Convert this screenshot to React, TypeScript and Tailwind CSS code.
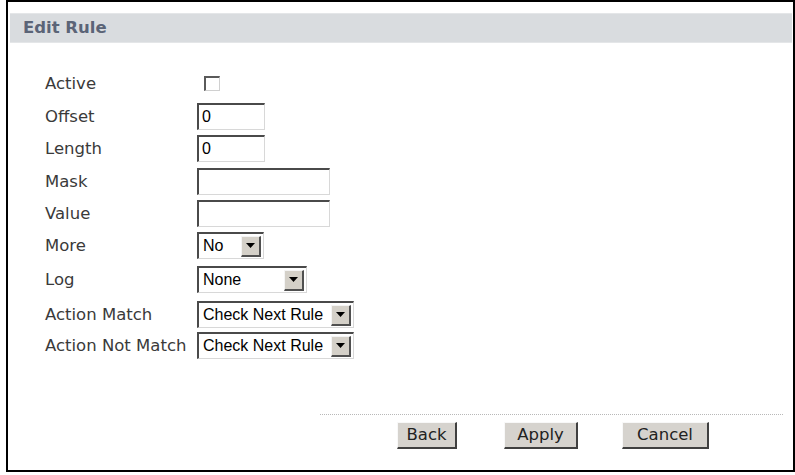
import React from "react";

const labelFont = { fontFamily: '"DejaVu Sans", Verdana, sans-serif' };
const ctrlFont = { fontFamily: '"Liberation Sans", Arial, sans-serif' };

function Arrow() {
  return (
    <svg width="9" height="5" viewBox="0 0 9 5">
      <polygon points="0,0 9,0 4.5,5" fill="#000" />
    </svg>
  );
}

function TextBox({ w, value }: { w: string; value?: string }) {
  return (
    <div
      className={`${w} h-[27px] bg-white border-t-2 border-l-2 border-b border-r border-t-[#4a4a4a] border-l-[#4a4a4a] border-b-[#d8d8d8] border-r-[#d8d8d8] flex items-center pl-[3px] text-[16px] text-black`}
      style={ctrlFont}
    >
      {value}
    </div>
  );
}

function Select({ w, value }: { w: string; value: string }) {
  return (
    <div
      className={`${w} h-[27px] bg-white border-t-2 border-l-2 border-b border-r border-t-[#4a4a4a] border-l-[#4a4a4a] border-b-[#d8d8d8] border-r-[#d8d8d8] flex items-center pl-[4px] pr-[2px] text-[16px] text-black`}
      style={ctrlFont}
    >
      <span className="flex-1 whitespace-nowrap overflow-hidden leading-none">{value}</span>
      <div className="w-[20px] h-[21px] bg-[#d4d0c8] border-t border-l border-t-[#f4f4f4] border-l-[#f4f4f4] border-b-2 border-r-2 border-b-[#505050] border-r-[#505050] flex items-center justify-center shrink-0">
        <Arrow />
      </div>
    </div>
  );
}

function Row({ label, mt, children }: { label: string; mt: string; children: React.ReactNode }) {
  return (
    <div className={`${mt} h-[27px] flex items-center`}>
      <div className="w-[152px] text-[16.5px] text-[#3a3a3a] whitespace-nowrap pt-[2px]" style={labelFont}>
        {label}
      </div>
      {children}
    </div>
  );
}

function Btn({ w, text }: { w: string; text: string }) {
  return (
    <div
      className={`${w} h-[27px] bg-[#d6d3ce] border-t border-l border-t-[#f8f8f8] border-l-[#f8f8f8] border-b-2 border-r-2 border-b-[#404040] border-r-[#404040] flex items-center justify-center text-[16.5px] text-[#222]`}
      style={labelFont}
    >
      {text}
    </div>
  );
}

export default function App() {
  return (
    <div className="w-[795px] h-[475px] bg-white overflow-hidden">
      <div className="ml-[6px] w-[789px] h-[472px] border-2 border-black flex flex-col">
        <div className="mt-[11px] ml-[2px] mr-[1px] h-[30px] bg-[#d9dcdf] border-t border-b border-t-[#e4e6e8] border-b-[#e4e6e8] flex items-center pl-[13px]">
          <span className="text-[16.5px] font-bold text-[#5b6477]" style={labelFont}>
            Edit Rule
          </span>
        </div>
        <div className="pl-[37px] flex flex-col">
          <Row label="Active" mt="mt-[27px]">
            <div className="ml-[7px] w-[16px] h-[15px] bg-white border-t-2 border-l-2 border-b border-r border-t-[#5a5a5a] border-l-[#5a5a5a] border-b-[#d0d0d0] border-r-[#d0d0d0]" />
          </Row>
          <Row label="Offset" mt="mt-[6px]">
            <TextBox w="w-[68px]" value="0" />
          </Row>
          <Row label="Length" mt="mt-[5px]">
            <TextBox w="w-[68px]" value="0" />
          </Row>
          <Row label="Mask" mt="mt-[6px]">
            <TextBox w="w-[133px]" />
          </Row>
          <Row label="Value" mt="mt-[5px]">
            <TextBox w="w-[133px]" />
          </Row>
          <Row label="More" mt="mt-[5px]">
            <Select w="w-[67px]" value="No" />
          </Row>
          <Row label="Log" mt="mt-[7px]">
            <Select w="w-[110px]" value="None" />
          </Row>
          <Row label="Action Match" mt="mt-[8px]">
            <Select w="w-[157px]" value="Check Next Rule" />
          </Row>
          <Row label="Action Not Match" mt="mt-[4px]">
            <Select w="w-[157px]" value="Check Next Rule" />
          </Row>
        </div>
        <div className="mt-[55px] ml-[312px] w-[463px] border-t border-dotted border-[#b8b8b8]" />
        <div className="mt-[7px] ml-[389px] flex">
          <Btn w="w-[60px]" text="Back" />
          <div className="w-[47px]" />
          <Btn w="w-[74px]" text="Apply" />
          <div className="w-[44px]" />
          <Btn w="w-[87px]" text="Cancel" />
        </div>
      </div>
    </div>
  );
}
